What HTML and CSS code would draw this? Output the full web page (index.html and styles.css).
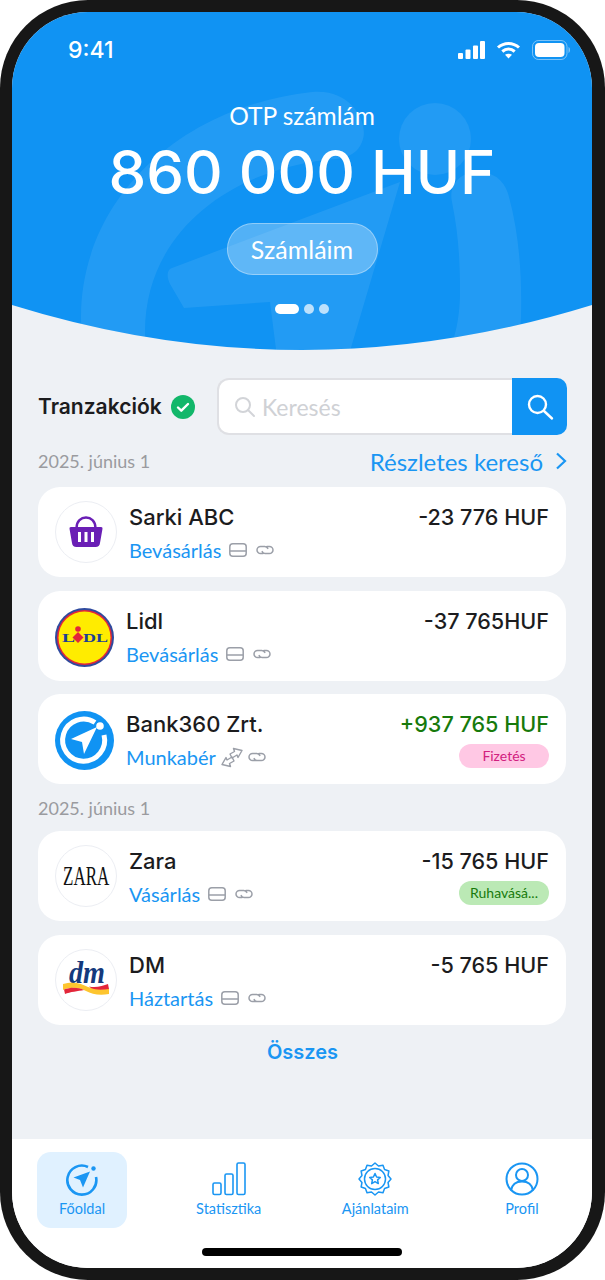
FILE: index.html
```html
<!DOCTYPE html>
<html lang="hu">
<head>
    <meta charset="UTF-8">
    <meta name="viewport" content="width=device-width, initial-scale=1.0">
    <title>Bank360</title>
    <link rel="stylesheet" href="styles.css">
</head>
<body>
    <svg class="defs" width="0" height="0">
        <symbol id="card" viewBox="0 0 18 14">
            <rect x="0.8" y="0.8" width="16.4" height="12.4" rx="3" fill="none" stroke="#9b9fa8" stroke-width="1.5"/>
            <path d="M1 8h16" stroke="#9b9fa8" stroke-width="1.5"/>
        </symbol>
        <symbol id="link" viewBox="0 0 20 12">
            <path d="M8 9.6H5.6a3.6 3.6 0 0 1 0-7.2h4.2a3.4 3.4 0 0 1 3 2M12 2.4h2.4a3.6 3.6 0 0 1 0 7.2h-4.2a3.4 3.4 0 0 1-3-2" fill="none" stroke="#9b9fa8" stroke-width="1.5" stroke-linecap="round"/>
        </symbol>
    </svg>

    <div class="phone">
        <div class="screen">
            <!-- Blue header -->
            <header class="hero">
                <svg class="hero-bg" viewBox="0 0 580 338" width="580" height="338">
                    <defs>
                        <clipPath id="wave"><path d="M0 0H580V293Q290 383 0 293Z"/></clipPath>
                    </defs>
                    <path d="M0 0H580V293Q290 383 0 293Z" fill="#1093f3"/>
                    <g clip-path="url(#wave)" fill="#fff" fill-opacity="0.08">
                        <path d="M69 305C69 190 165 95 300 80C340 76 358 112 350 130C342 150 320 146 300 150C210 165 133 225 133 320C133 345 136 360 140 400H90C75 370 69 340 69 305Z"/>
                        <path d="M440 190C436 172 450 158 470 160C486 162 494 172 497 185C508 225 510 270 509 305C505 390 450 420 400 450H340C400 400 448 360 448 280C448 245 446 220 440 190Z"/>
                        <path d="M388 170L160 256C154 258 155 266 158 272L172 296L258 290L272 400H320Z"/>
                        <ellipse cx="423" cy="127" rx="36" ry="36"/>
                    </g>
                </svg>
                <div class="status">
                    <span class="time">9:41</span>
                    <div class="status-icons">
                        <svg width="27" height="18" viewBox="0 0 27 18" fill="#fff">
                            <rect x="0" y="12" width="5" height="6" rx="1"/>
                            <rect x="7.5" y="8.5" width="5" height="9.5" rx="1"/>
                            <rect x="15" y="4.5" width="5" height="13.5" rx="1"/>
                            <rect x="22" y="0" width="5" height="18" rx="1"/>
                        </svg>
                        <svg width="25" height="18" viewBox="0 0 25 18" fill="none" stroke="#fff" stroke-width="3">
                            <path d="M2 6.5C8 1 17 1 23 6.5"/>
                            <path d="M6.3 10.5C10 7.3 15 7.3 18.7 10.5"/>
                            <path d="M12.5 17.5L9 13.8C11 12.3 14 12.3 16 13.8Z" fill="#fff" stroke="none"/>
                        </svg>
                        <svg width="38" height="20" viewBox="0 0 38 20">
                            <rect x="0.5" y="0.5" width="34.5" height="19" rx="6" fill="none" stroke="#fff" stroke-opacity="0.45"/>
                            <rect x="3" y="3" width="29.5" height="14" rx="4" fill="#fff"/>
                            <path d="M36.5 7v6c1-.4 1.500-1.600 1.500-3s-.5-2.600-1.500-3Z" fill="#fff" fill-opacity="0.45"/>
                        </svg>
                    </div>
                </div>
                <div class="hero-title">OTP számlám</div>
                <div class="hero-amount">860 000 HUF</div>
                <button class="hero-btn">Számláim</button>
                <div class="pager">
                    <span class="pager-on"></span>
                    <span class="pager-dot"></span>
                    <span class="pager-dot"></span>
                </div>
            </header>

            <main class="content">
                <!-- Title and search -->
                <div class="search-row">
                    <h2 class="section-title">Tranzakciók</h2>
                    <svg class="check" width="24" height="24" viewBox="0 0 24 24">
                        <circle cx="12" cy="12" r="12" fill="#12b76a"/>
                        <path d="M7 12.5l3.3 3.2L17 9" fill="none" stroke="#fff" stroke-width="2.4" stroke-linecap="round" stroke-linejoin="round"/>
                    </svg>
                    <div class="search">
                        <div class="search-input">
                            <svg width="22" height="22" viewBox="0 0 22 22" fill="none" stroke="#d2d4d8" stroke-width="2">
                                <circle cx="9" cy="9" r="7"/>
                                <path d="M14 14l6 6" stroke-linecap="round"/>
                            </svg>
                            <span>Keresés</span>
                        </div>
                        <div class="search-btn">
                            <svg width="28" height="28" viewBox="0 0 28 28" fill="none" stroke="#fff" stroke-width="2.4">
                                <circle cx="11.5" cy="11.5" r="8.5"/>
                                <path d="M18 18l8 7.5" stroke-linecap="round"/>
                            </svg>
                        </div>
                    </div>
                </div>

                <div class="date-row">
                    <span class="date">2025. június 1</span>
                    <a class="more">Részletes kereső
                        <svg width="12" height="18" viewBox="0 0 12 18" fill="none" stroke="#1a96f3" stroke-width="2.2"><path d="M2 1.5L10 9L2 16.5"/></svg>
                    </a>
                </div>

                <!-- Transactions -->
                <div class="card">
                    <div class="logo logo-ring">
                        <svg width="34" height="34" viewBox="0 0 34 34">
                            <path d="M7.5 13C7.500-1 26.500-1 26.500 13" fill="none" stroke="#6a1fb5" stroke-width="2.4"/>
                            <path d="M2 12h30a1.500 1.500 0 0 1 1.500 1.800L31 28a4.500 4.500 0 0 1-4.500 4H7.500A4.500 4.500 0 0 1 3 28L.5 13.800A1.500 1.500 0 0 1 2 12Z" fill="#6a1fb5"/>
                            <path d="M10.500 17v10M17 17v10M23.500 17v10" stroke="#fff" stroke-width="3"/>
                        </svg>
                    </div>
                    <div class="info">
                        <div class="name">Sarki ABC</div>
                        <div class="sub"><span class="cat">Bevásárlás</span><svg class="ic-card"><use href="#card"/></svg><svg class="ic-link"><use href="#link"/></svg></div>
                    </div>
                    <div class="side"><div class="amount">-23 776 HUF</div></div>
                </div>

                <div class="card">
                    <div class="logo logo-small">
                        <svg width="59" height="59" viewBox="0 0 59 59">
                            <circle cx="29.500" cy="29.500" r="29.500" fill="#2f4a9e"/>
                            <circle cx="29.500" cy="29.500" r="27.500" fill="#e3263a"/>
                            <circle cx="29.500" cy="29.500" r="26" fill="#ffec00"/>
                            <text class="lidl-text" x="7" y="33.500" textLength="13" lengthAdjust="spacingAndGlyphs">L</text>
                            <text class="lidl-text" x="28" y="33.500" textLength="25" lengthAdjust="spacingAndGlyphs">DL</text>
                            <circle cx="23" cy="21" r="2.800" fill="#e3263a"/>
                            <path d="M23 24l5.500 5.500L23 35l-5.500-5.500Z" fill="#e3263a"/>
                        </svg>
                    </div>
                    <div class="info">
                        <div class="name">Lidl</div>
                        <div class="sub"><span class="cat">Bevásárlás</span><svg class="ic-card"><use href="#card"/></svg><svg class="ic-link"><use href="#link"/></svg></div>
                    </div>
                    <div class="side"><div class="amount">-37 765HUF</div></div>
                </div>

                <div class="card card-tight">
                    <div class="logo logo-small">
                        <svg width="59" height="59" viewBox="0 0 59 59">
                            <circle cx="29.500" cy="29.500" r="29.500" fill="#1093f3"/>
                            <path d="M40 11.500A21 21 0 1 0 49 24" fill="none" stroke="#fff" stroke-width="5"/>
                            <circle cx="45" cy="15" r="3.800" fill="#fff"/>
                            <path d="M42 16L16 28l11 3 2 12Z" fill="#fff"/>
                        </svg>
                    </div>
                    <div class="info">
                        <div class="name">Bank360 Zrt.</div>
                        <div class="sub"><span class="cat">Munkabér</span>
                            <svg class="ic-swap" width="22" height="21" viewBox="0 0 22 21" fill="none" stroke="#9b9fa8" stroke-width="1.400" stroke-linejoin="round">
                                <path d="M9 7L13.500 4.500 12.500 1.500 21 3.500 17 10.500 16 8 11 11Z"/>
                                <path d="M13 14L8.500 16.500 9.500 19.500 1 17.500 5 10.500 6 13 11 10Z"/>
                            </svg><svg class="ic-link ic-link-near"><use href="#link"/></svg></div>
                    </div>
                    <div class="side">
                        <div class="amount amount-in">+937 765 HUF</div>
                        <div class="tag tag-pink">Fizetés</div>
                    </div>
                </div>

                <div class="date date-second">2025. június 1</div>

                <div class="card">
                    <div class="logo logo-ring">
                        <svg width="60" height="60" viewBox="0 0 60 60">
                            <g transform="translate(7 39) scale(.63 1)">
                                <text class="zara-text">ZARA</text>
                            </g>
                        </svg>
                    </div>
                    <div class="info">
                        <div class="name">Zara</div>
                        <div class="sub"><span class="cat">Vásárlás</span><svg class="ic-card"><use href="#card"/></svg><svg class="ic-link"><use href="#link"/></svg></div>
                    </div>
                    <div class="side">
                        <div class="amount">-15 765 HUF</div>
                        <div class="tag tag-green">Ruhavásá...</div>
                    </div>
                </div>

                <div class="card">
                    <div class="logo logo-ring">
                        <svg width="60" height="60" viewBox="0 0 60 60">
                            <text class="dm-text" x="13" y="33" textLength="36" lengthAdjust="spacingAndGlyphs">dm</text>
                            <path d="M7 34C18 31 26 34 32 37C40 40 47 39 53 39L53 44C43 46 36 44 30 41C22 37 14 37 7 40Z" fill="#fdc52f"/>
                            <path d="M8 39.500C15 37 22 37 28 40C22 41 14 42 9 44Z" fill="#e3263a"/>
                            <path d="M33 36.500C40 38 47 36 52 34L53 39C46 40 39 40 35 38Z" fill="#e3263a"/>
                        </svg>
                    </div>
                    <div class="info">
                        <div class="name">DM</div>
                        <div class="sub"><span class="cat">Háztartás</span><svg class="ic-card"><use href="#card"/></svg><svg class="ic-link"><use href="#link"/></svg></div>
                    </div>
                    <div class="side"><div class="amount">-5 765 HUF</div></div>
                </div>

                <a class="all">Összes</a>
            </main>

            <!-- Bottom navigation -->
            <nav class="tabbar">
                <div class="tab tab-active">
                    <svg width="34" height="34" viewBox="0 0 34 34" fill="none" stroke="#1a96f3" stroke-width="2.600">
                        <path d="M23 5A14.500 14.500 0 1 0 31 15"/>
                        <circle cx="28.500" cy="6.500" r="2.200" fill="#1a96f3" stroke="none"/>
                        <path d="M25 9.500L8.500 15.500l6.500 2.500 3 7.500Z" fill="#1a96f3" stroke="none"/>
                    </svg>
                    <span>Főoldal</span>
                </div>
                <div class="tab">
                    <svg width="34" height="34" viewBox="0 0 34 34" fill="none" stroke="#1a96f3" stroke-width="1.600">
                        <rect x="1" y="21" width="8" height="11.500" rx="1.500"/>
                        <rect x="13" y="12" width="8" height="20.500" rx="1.500"/>
                        <rect x="25" y="1" width="8" height="31.500" rx="1.500"/>
                    </svg>
                    <span>Statisztika</span>
                </div>
                <div class="tab">
                    <svg width="34" height="34" viewBox="-1 -1 34 34" fill="none" stroke="#1a96f3" stroke-width="1.500" stroke-linejoin="round">
                        <polygon points="16,0 19.500,2.960 24,2.140 25.550,6.450 29.860,8 29.040,12.500 32,16 29.040,19.500 29.860,24 25.550,25.550 24,29.860 19.500,29.040 16,32 12.500,29.040 8,29.860 6.450,25.550 2.140,24 2.960,19.500 0,16 2.960,12.500 2.140,8 6.450,6.450 8,2.140 12.500,2.960"/>
                        <circle cx="16" cy="16" r="10.500"/>
                        <polygon points="16,10.500 17.600,14 21.300,14.400 18.600,16.900 19.300,20.600 16,18.700 12.700,20.600 13.400,16.900 10.700,14.400 14.400,14"/>
                    </svg>
                    <span>Ajánlataim</span>
                </div>
                <div class="tab">
                    <svg width="34" height="34" viewBox="0 0 34 34" fill="none" stroke="#1a96f3" stroke-width="2">
                        <circle cx="17" cy="17" r="15.500"/>
                        <circle cx="17" cy="13" r="6"/>
                        <path d="M6 28.500C7 22.500 11 19.500 17 19.500S27 22.500 28 28.500"/>
                    </svg>
                    <span>Profil</span>
                </div>
                <div class="home-bar"></div>
            </nav>
        </div>
    </div>
</body>
</html>
```

FILE: styles.css
```css
* {
    box-sizing: border-box;
}
body {
    font-family: "Lato", "Liberation Sans", sans-serif;
    margin: 0;
    padding: 0;
    background-color: #fff;
    color: #1c1c1e;
}
.defs {
    position: absolute;
}
.phone {
    width: 605px;
    height: 1280px;
    padding: 12px 13px 12px 12px;
    background-color: #171717;
    border-radius: 88px;
}
.screen {
    display: flex;
    flex-direction: column;
    height: 1256px;
    background-color: #eef1f5;
    border-radius: 76px;
    overflow: hidden;
}

/* Header */
.hero {
    position: relative;
    flex: none;
    height: 338px;
    display: flex;
    flex-direction: column;
    align-items: center;
    color: #fff;
}
.hero-bg {
    position: absolute;
    left: 0;
    top: 0;
}
.status,
.hero-title,
.hero-amount,
.hero-btn,
.pager {
    position: relative;
}
.status {
    width: 100%;
    height: 26px;
    margin-top: 25px;
    padding: 0 22px 0 56px;
    display: flex;
    justify-content: space-between;
    align-items: center;
}
.time {
    font-family: "Inter", sans-serif;
    font-size: 23px;
    font-weight: 500;
}
.status-icons {
    display: flex;
    align-items: center;
    gap: 11px;
}
.hero-title {
    margin-top: 38px;
    font-size: 24.5px;
    line-height: 30px;
}
.hero-amount {
    margin-top: 11px;
    font-family: "Inter", sans-serif;
    font-size: 60px;
    line-height: 60px;
    font-weight: 500;
}
.hero-btn {
    width: 151px;
    height: 52px;
    margin-top: 21px;
    font-family: inherit;
    font-size: 25px;
    color: #fff;
    background-color: rgba(255, 255, 255, 0.28);
    border: 1px solid rgba(255, 255, 255, 0.35);
    border-radius: 26px;
}
.pager {
    display: flex;
    align-items: center;
    gap: 5px;
    margin-top: 29px;
}
.pager-on {
    width: 24px;
    height: 10px;
    background-color: #fff;
    border-radius: 5px;
}
.pager-dot {
    width: 10px;
    height: 10px;
    background-color: rgba(255, 255, 255, 0.7);
    border-radius: 50%;
}

/* Content */
.content {
    flex: 1;
    padding: 28px 25px 0 26px;
}
.search-row {
    display: flex;
    align-items: center;
    height: 57px;
}
.section-title {
    margin: 0;
    font-family: "Inter", sans-serif;
    font-size: 21px;
    font-weight: 600;
}
.check {
    margin-left: 9px;
}
.search {
    display: flex;
    width: 350px;
    height: 57px;
    margin-left: auto;
}
.search-input {
    flex: 1;
    display: flex;
    align-items: center;
    gap: 6px;
    padding-left: 15px;
    font-size: 23px;
    color: #cfd1d5;
    background-color: #fff;
    border: 2px solid #dfe0e4;
    border-right: none;
    border-radius: 12px 0 0 12px;
}
.search-btn {
    width: 55px;
    display: flex;
    align-items: center;
    justify-content: center;
    background-color: #1093f3;
    border-radius: 0 10px 10px 0;
}
.date-row {
    display: flex;
    justify-content: space-between;
    align-items: center;
    height: 26px;
    margin-top: 13px;
}
.date {
    font-size: 18px;
    color: #9a9b9f;
}
.more {
    display: flex;
    align-items: center;
    gap: 12px;
    font-size: 24px;
    color: #1a96f3;
}
.card {
    display: flex;
    align-items: flex-start;
    height: 90px;
    margin-top: 14px;
    margin-right: 1px;
    padding: 14px 17px 0;
    background-color: #fff;
    border-radius: 22px;
}
.card-tight {
    margin-top: 13px;
}
.date-row + .card {
    margin-top: 13px;
}
.logo {
    flex: none;
    display: flex;
    align-items: center;
    justify-content: center;
    width: 62px;
    height: 62px;
    margin-right: 12px;
}
.logo-ring {
    border: 1.5px solid #eceef3;
    border-radius: 50%;
}
.logo-small {
    width: 59px;
    margin-top: 1px;
}
.info {
    flex: 1;
}
.name {
    height: 33px;
    line-height: 33px;
    font-family: "Inter", sans-serif;
    font-size: 22px;
    font-weight: 500;
}
.sub {
    display: flex;
    align-items: center;
    height: 32px;
}
.cat {
    font-size: 20px;
    color: #1a96f3;
}
.ic-card {
    width: 18px;
    height: 14px;
    margin-left: 8px;
}
.ic-link {
    width: 20px;
    height: 12px;
    margin-left: 8px;
}
.ic-swap {
    margin-left: 5px;
}
.ic-link-near {
    margin-left: 4px;
}
.side {
    display: flex;
    flex-direction: column;
    align-items: flex-end;
}
.amount {
    height: 33px;
    line-height: 33px;
    font-family: "Inter", sans-serif;
    font-size: 21.6px;
    font-weight: 500;
}
.amount-in {
    color: #177a0c;
}
.tag {
    width: 90px;
    height: 24px;
    margin-top: 3px;
    font-size: 14px;
    line-height: 24px;
    text-align: center;
    border-radius: 12px;
}
.tag-pink {
    color: #d1207f;
    background-color: #ffc8e4;
}
.tag-green {
    color: #177a0c;
    background-color: #bbe9b5;
}
.date-second {
    height: 26px;
    line-height: 26px;
    margin-top: 11px;
}
.date-second + .card {
    margin-top: 10px;
}
.all {
    display: block;
    margin-top: 13px;
    font-family: "Inter", sans-serif;
    font-size: 20px;
    line-height: 28px;
    font-weight: 600;
    text-align: center;
    color: #1a96f3;
}

/* Logos */
.lidl-text {
    font-family: "Liberation Serif", serif;
    font-size: 13px;
    font-weight: 700;
    fill: #1d3f94;
}
.zara-text {
    font-family: "Liberation Serif", serif;
    font-size: 27px;
    fill: #111;
}
.dm-text {
    font-family: "Liberation Serif", serif;
    font-size: 32px;
    font-weight: 700;
    font-style: italic;
    fill: #14397c;
}

/* Bottom navigation */
.tabbar {
    position: relative;
    flex: none;
    height: 129px;
    padding: 13px 25px 0;
    display: flex;
    justify-content: space-between;
    align-items: flex-start;
    background-color: #fff;
}
.tab {
    display: flex;
    flex-direction: column;
    align-items: center;
    gap: 4px;
    width: 90px;
    height: 76px;
    padding-top: 10px;
    font-size: 14.5px;
    color: #1a96f3;
    border-radius: 14px;
}
.tab-active {
    background-color: #e0f1ff;
}
.home-bar {
    position: absolute;
    left: 190px;
    bottom: 12px;
    width: 200px;
    height: 8px;
    background-color: #000;
    border-radius: 4px;
}
```
